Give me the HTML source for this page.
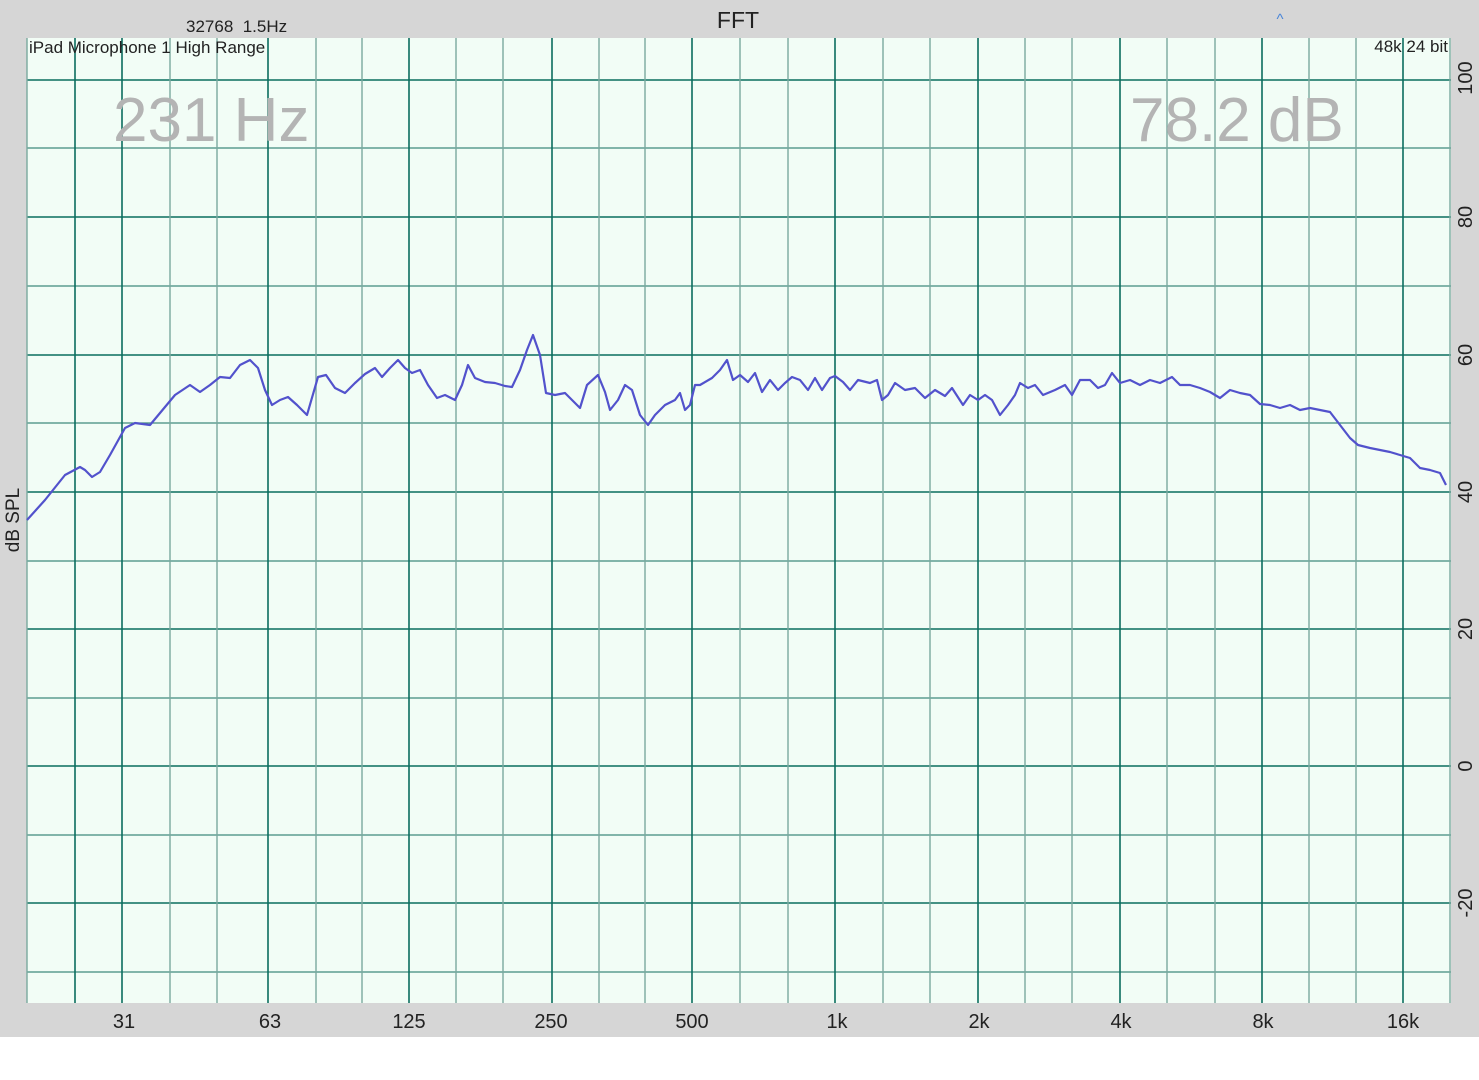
<!DOCTYPE html>
<html><head><meta charset="utf-8"><style>
html,body{margin:0;padding:0;background:#fff;}
svg{display:block;font-family:"Liberation Sans",sans-serif;}
</style></head><body>
<svg width="1479" height="1080" viewBox="0 0 1479 1080" xmlns="http://www.w3.org/2000/svg">
<rect x="0" y="0" width="1479" height="1037" fill="#d6d6d6"/>
<rect x="27" y="38" width="1424" height="965" fill="#f2fdf6"/>
<g stroke="#0b6e5f" stroke-width="1.6">
<line x1="27" y1="80" x2="1451" y2="80"/><line x1="27" y1="217" x2="1451" y2="217"/>
<line x1="27" y1="355" x2="1451" y2="355"/><line x1="27" y1="492" x2="1451" y2="492"/>
<line x1="27" y1="629" x2="1451" y2="629"/><line x1="27" y1="766" x2="1451" y2="766"/>
<line x1="27" y1="903" x2="1451" y2="903"/>
</g>
<g stroke="#3f8a7c" stroke-width="1.2">
<line x1="27" y1="148" x2="1451" y2="148"/><line x1="27" y1="286" x2="1451" y2="286"/>
<line x1="27" y1="423" x2="1451" y2="423"/><line x1="27" y1="561" x2="1451" y2="561"/>
<line x1="27" y1="698" x2="1451" y2="698"/><line x1="27" y1="835" x2="1451" y2="835"/>
<line x1="27" y1="972" x2="1451" y2="972"/>
</g>
<g stroke="#0b6e5f" stroke-width="1.6">
<line x1="122" y1="38" x2="122" y2="1003"/><line x1="268" y1="38" x2="268" y2="1003"/>
<line x1="409" y1="38" x2="409" y2="1003"/><line x1="552" y1="38" x2="552" y2="1003"/>
<line x1="692" y1="38" x2="692" y2="1003"/><line x1="835" y1="38" x2="835" y2="1003"/>
<line x1="978" y1="38" x2="978" y2="1003"/><line x1="1120" y1="38" x2="1120" y2="1003"/>
<line x1="1262" y1="38" x2="1262" y2="1003"/><line x1="1403" y1="38" x2="1403" y2="1003"/>
<line x1="75" y1="38" x2="75" y2="1003"/>
</g>
<g stroke="#7aa89f" stroke-width="1.4">
<line x1="27" y1="38" x2="27" y2="1003"/>
<line x1="170" y1="38" x2="170" y2="1003"/><line x1="217" y1="38" x2="217" y2="1003"/>
<line x1="316" y1="38" x2="316" y2="1003"/><line x1="362" y1="38" x2="362" y2="1003"/>
<line x1="456" y1="38" x2="456" y2="1003"/><line x1="503" y1="38" x2="503" y2="1003"/>
<line x1="599" y1="38" x2="599" y2="1003"/><line x1="645" y1="38" x2="645" y2="1003"/>
<line x1="740" y1="38" x2="740" y2="1003"/><line x1="788" y1="38" x2="788" y2="1003"/>
<line x1="883" y1="38" x2="883" y2="1003"/><line x1="930" y1="38" x2="930" y2="1003"/>
<line x1="1025" y1="38" x2="1025" y2="1003"/><line x1="1072" y1="38" x2="1072" y2="1003"/>
<line x1="1167" y1="38" x2="1167" y2="1003"/><line x1="1215" y1="38" x2="1215" y2="1003"/>
<line x1="1309" y1="38" x2="1309" y2="1003"/><line x1="1356" y1="38" x2="1356" y2="1003"/>
<line x1="1450" y1="38" x2="1450" y2="1003"/>
</g>
<text x="113" y="141" font-size="62" fill="#b4b4b4">231 Hz</text>
<text x="1130" y="141" font-size="62" fill="#b4b4b4">78.2 dB</text>
<polyline fill="none" stroke="#5252cc" stroke-width="2.2" stroke-linejoin="round" points="27,520 45,500 65,475 80,467 85,470 92,477 100,472 110,455 125,428 135,423 150,425 160,413 175,395 190,385 200,392 210,385 220,377 230,378 240,365 250,360 258,368 265,390 272,405 280,400 288,397 297,405 307,415 318,377 326,375 335,388 345,393 355,383 365,374 375,368 382,377 390,368 398,360 405,368 412,373 420,370 428,385 437,398 445,395 455,400 462,385 468,365 475,378 485,382 495,383 505,386 512,387 520,370 527,350 533,335 540,355 546,393 555,395 565,393 572,400 580,408 587,385 598,375 605,392 610,410 618,400 625,385 632,390 640,415 648,425 655,415 665,405 675,400 680,393 685,410 690,405 695,385 700,385 712,378 720,370 727,360 733,380 740,375 748,382 755,373 762,392 770,380 778,390 785,383 792,377 800,380 808,390 815,378 822,390 830,378 835,376 843,382 850,390 858,380 870,383 877,380 882,400 888,395 895,383 905,390 915,388 925,398 935,390 945,396 952,388 963,405 970,395 978,400 985,395 992,400 1000,415 1008,405 1015,395 1020,383 1028,388 1035,385 1043,395 1055,390 1065,385 1072,395 1080,380 1090,380 1098,388 1105,385 1112,373 1120,383 1130,380 1140,385 1150,380 1160,383 1172,377 1180,385 1190,385 1200,388 1210,392 1220,398 1230,390 1240,393 1250,395 1260,404 1270,405 1280,408 1290,405 1300,410 1310,408 1320,410 1330,412 1340,425 1350,438 1358,445 1370,448 1380,450 1390,452 1400,455 1410,458 1420,468 1430,470 1440,473 1446,485"/>
<text x="738" y="28" font-size="23" fill="#222" text-anchor="middle">FFT</text>
<text x="186" y="32" font-size="17" fill="#222" xml:space="preserve">32768  1.5Hz</text>
<text x="29" y="53" font-size="17" fill="#222">iPad Microphone 1 High Range</text>
<text x="1448" y="52" font-size="17" fill="#222" text-anchor="end">48k 24 bit</text>
<text x="1280" y="24" font-size="15" fill="#4a86d8" text-anchor="middle">^</text>
<g font-size="20" fill="#222" text-anchor="middle">
<text x="124" y="1028">31</text><text x="270" y="1028">63</text><text x="409" y="1028">125</text>
<text x="551" y="1028">250</text><text x="692" y="1028">500</text><text x="837" y="1028">1k</text>
<text x="979" y="1028">2k</text><text x="1121" y="1028">4k</text><text x="1263" y="1028">8k</text>
<text x="1403" y="1028">16k</text>
</g>
<g font-size="20" fill="#222" text-anchor="middle">
<text transform="translate(1472,78) rotate(-90)">100</text>
<text transform="translate(1472,217) rotate(-90)">80</text>
<text transform="translate(1472,355) rotate(-90)">60</text>
<text transform="translate(1472,492) rotate(-90)">40</text>
<text transform="translate(1472,629) rotate(-90)">20</text>
<text transform="translate(1472,766) rotate(-90)">0</text>
<text transform="translate(1472,903) rotate(-90)">-20</text>
<text transform="translate(19,520) rotate(-90)" font-size="19">dB SPL</text>
</g>
</svg>
</body></html>
